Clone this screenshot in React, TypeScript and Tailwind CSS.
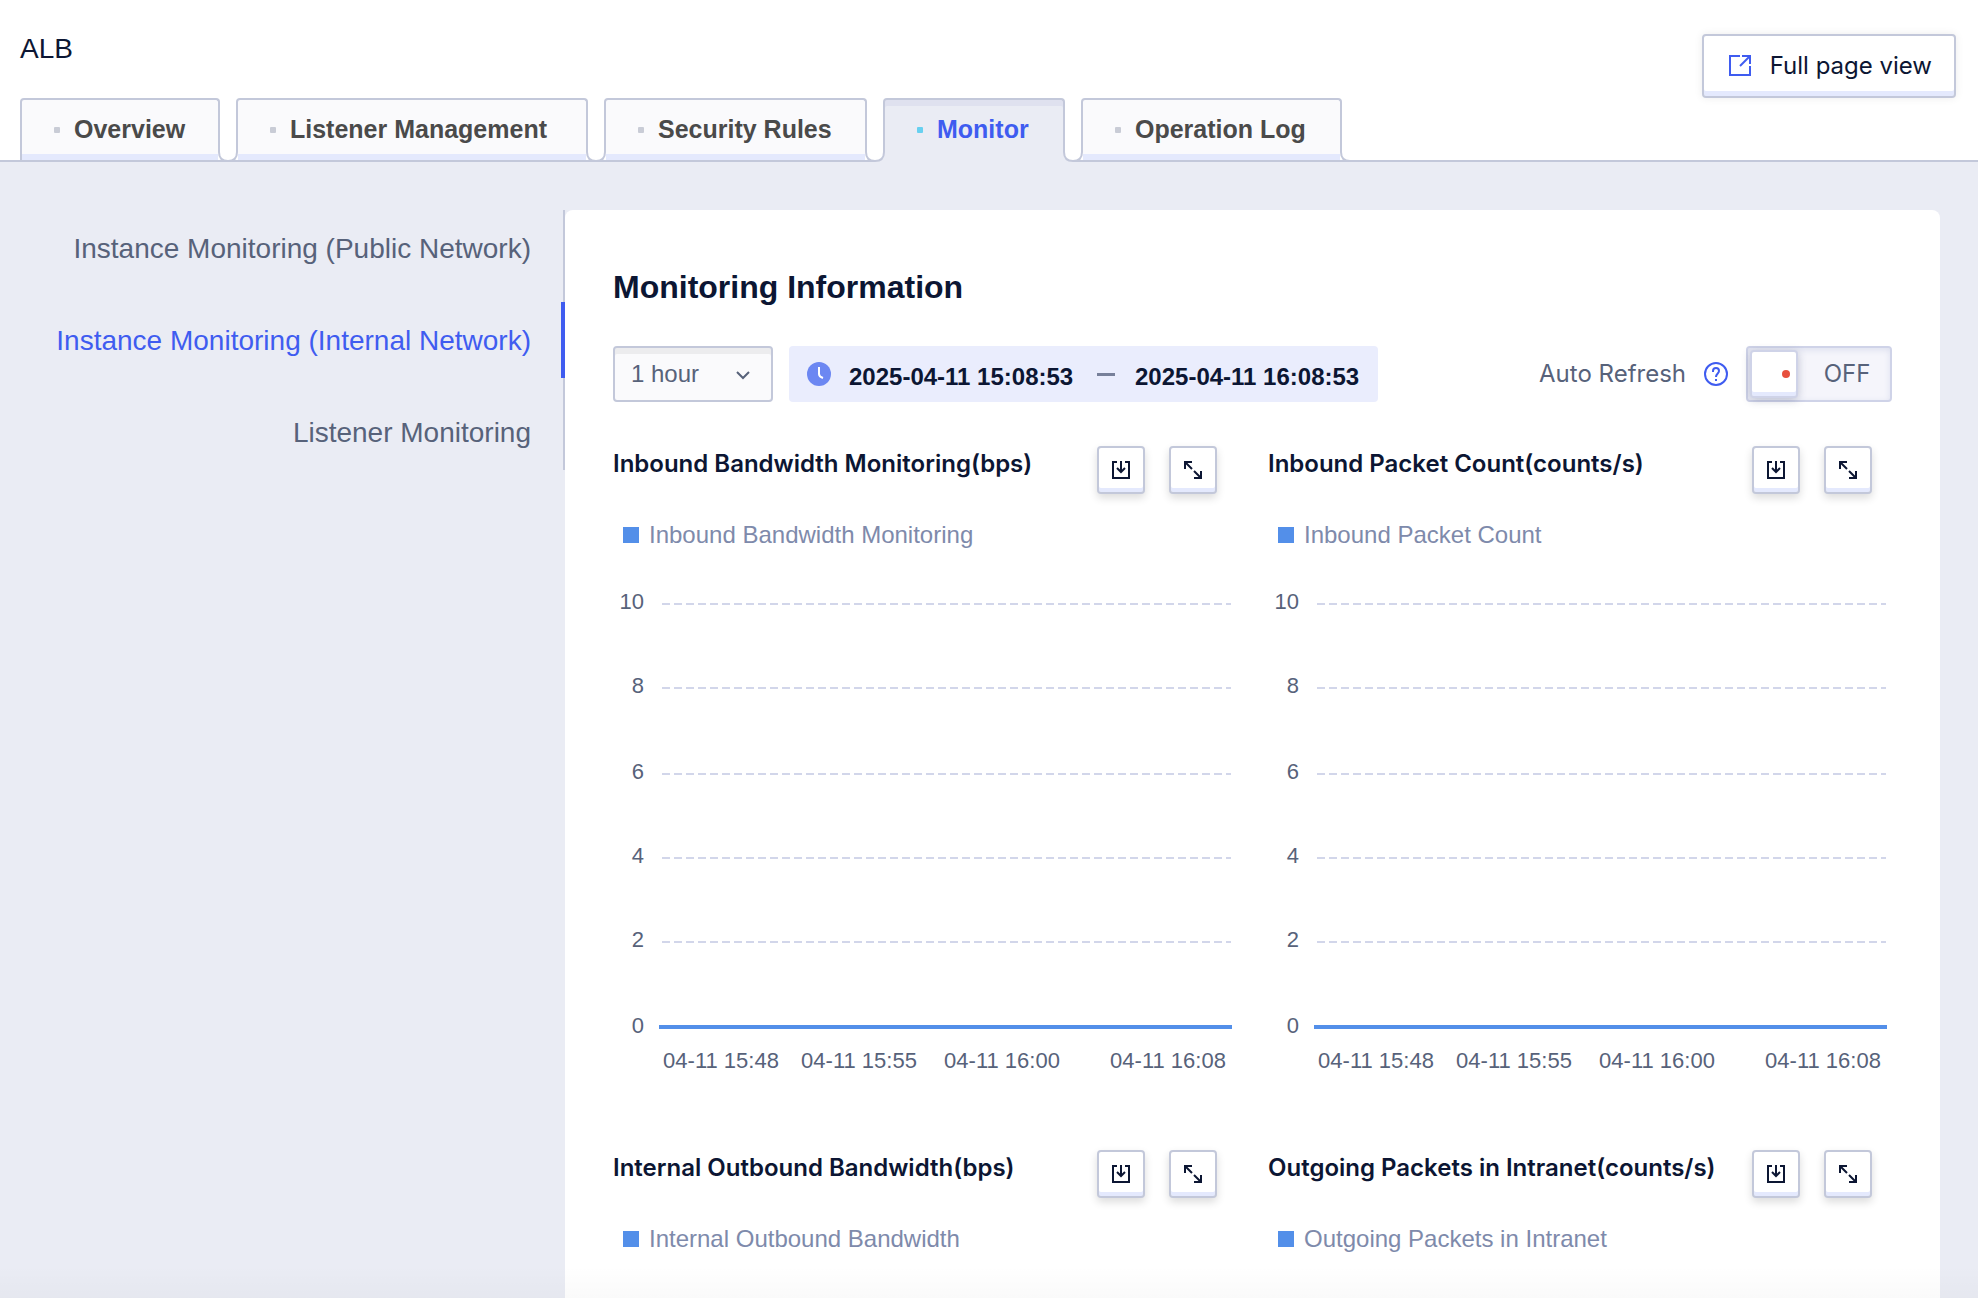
type ChartInfo = { title: string; legend: string }

const TABS = [
  { label: 'Overview', width: 'min-w-[200px]' },
  { label: 'Listener Management', width: 'min-w-[352px]' },
  { label: 'Security Rules', width: 'min-w-[263px]' },
  { label: 'Monitor', width: 'min-w-[182px]' },
  { label: 'Operation Log', width: 'min-w-[261px]' },
]

const MENU = [
  'Instance Monitoring (Public Network)',
  'Instance Monitoring (Internal Network)',
  'Listener Monitoring',
]

const CHARTS: ChartInfo[] = [
  { title: 'Inbound Bandwidth Monitoring(bps)', legend: 'Inbound Bandwidth Monitoring' },
  { title: 'Inbound Packet Count(counts/s)', legend: 'Inbound Packet Count' },
  { title: 'Internal Outbound Bandwidth(bps)', legend: 'Internal Outbound Bandwidth' },
  { title: 'Outgoing Packets in Intranet(counts/s)', legend: 'Outgoing Packets in Intranet' },
]

const Y_TICKS = [
  { value: 10, y: 34 },
  { value: 8, y: 118 },
  { value: 6, y: 204 },
  { value: 4, y: 288 },
  { value: 2, y: 372 },
]

const X_TICKS = [
  { label: '04-11 15:48', x: 108 },
  { label: '04-11 15:55', x: 246 },
  { label: '04-11 16:00', x: 389 },
  { label: '04-11 16:08', x: 555 },
]

function ExternalIcon() {
  return (
    <svg className="size-6" viewBox="0 0 24 24" fill="none" stroke="currentColor" strokeWidth="2" aria-hidden="true">
      <path d="M12 2H2v19h20v-9" />
      <path d="M14 2h8v8" />
      <path d="M22 2 12 12" />
    </svg>
  )
}

function DownloadIcon() {
  return (
    <svg className="size-5" viewBox="0 0 20 20" fill="none" stroke="currentColor" strokeWidth="2" aria-hidden="true">
      <path d="M6 2H2v16h16V2h-4" />
      <path d="M10 1v11M6 8l4 4 4-4" />
    </svg>
  )
}

function ExpandIcon() {
  return (
    <svg className="size-5" viewBox="0 0 20 20" fill="none" stroke="currentColor" strokeWidth="2" aria-hidden="true">
      <path d="M2 9V2h7M2 2l7 7" />
      <path d="M18 11v7h-7M18 18l-7-7" />
    </svg>
  )
}

function HelpIcon() {
  return (
    <svg className="size-6" viewBox="0 0 24 24" fill="none" stroke="currentColor" strokeWidth="2" aria-hidden="true">
      <circle cx="12" cy="12" r="11" />
      <path d="M9 10V9a3 3 0 0 1 6 0c0 2.500-3 2.500-3 6" />
      <path d="M12 17v2" />
    </svg>
  )
}

function ClockIcon() {
  return (
    <svg className="size-6" viewBox="0 0 24 24" fill="none" aria-hidden="true">
      <circle cx="12" cy="12" r="12" fill="#6c87f2" />
      <path d="M12 5v7c0 2 1 3 4 4" stroke="#fff" strokeWidth="2" />
    </svg>
  )
}

// curved foot joining a tab's side to the header line
function TabFoot({ side, active }: { side: 'left' | 'right'; active: boolean }) {
  return (
    <svg
      className={`absolute -bottom-0.5 size-2.5 ${side === 'left' ? '-left-2 -scale-x-100' : '-right-2'}`}
      viewBox="0 0 10 10"
      fill="none"
      aria-hidden="true"
    >
      <path d="M0 0h10v10H0z" fill="#fff" />
      {active && <path d="M0 0h1c0 6 3 9 9 9v1H0z" fill="#eaecf4" />}
      <path d="M1 0c0 6 3 9 9 9" stroke="#c3c8da" strokeWidth="2" />
      {!active && <path d="M0 9h10" stroke="#c3c8da" strokeWidth="2" />}
    </svg>
  )
}

function Tab({ label, width, active, first }: { label: string; width: string; active: boolean; first: boolean }) {
  const look = active
    ? 'h-16 bg-[#eaecf4] pb-0.5 text-[#3f5cf0] shadow-[inset_0_6px_0_#dfe1ef]'
    : 'h-[62px] bg-[#fafafc] text-[#4a4a4a] shadow-[inset_0_-6px_0_#e4e9fd]'
  return (
    <div className="relative h-[62px]">
      <button
        role="tab"
        aria-selected={active}
        className={`flex items-center rounded-t border-2 border-b-0 border-[#c3c8da] px-8 text-[25px] font-bold ${width} ${look}`}
      >
        <span className={`mr-3.5 size-1.5 rounded-[1px] ${active ? 'bg-[#67d0f0]' : 'bg-[#c9ccd6]'}`} />
        {label}
      </button>
      {!first && <TabFoot side="left" active={active} />}
      <TabFoot side="right" active={active} />
    </div>
  )
}

function ToolButton({ label, children }: { label: string; children: React.ReactNode }) {
  return (
    <button
      aria-label={label}
      className="flex size-12 items-center justify-center rounded border-2 border-[#c3c8da] bg-white shadow-[inset_0_-4px_0_#e4e9fd,0_4px_8px_rgba(0,0,0,0.14)]"
    >
      {children}
    </button>
  )
}

function Chart({ title, legend }: ChartInfo) {
  return (
    <section>
      <div className="flex h-12 items-start justify-between pr-5">
        <h3 className="font-[Inter,sans-serif] text-2xl leading-9 font-semibold whitespace-nowrap">{title}</h3>
        <div className="flex gap-6">
          <ToolButton label={`Download ${legend}`}>
            <DownloadIcon />
          </ToolButton>
          <ToolButton label={`Expand ${legend}`}>
            <ExpandIcon />
          </ToolButton>
        </div>
      </div>
      <div className="mt-[25px] flex items-center gap-2.5 pl-2.5 text-2xl leading-8 text-[#7e8aab]">
        <span className="size-4 bg-[#538fe9]" />
        {legend}
      </div>
      <svg className="mt-[19px] w-full" viewBox="0 0 624 520" role="img" aria-label={legend}>
        <g fill="#57627a" fontSize="22">
          {Y_TICKS.map((tick) => (
            <g key={tick.value}>
              <text x="31" y={tick.y + 5} textAnchor="end">
                {tick.value}
              </text>
              <path d={`M49 ${tick.y}H618`} stroke="#d2d6ea" strokeWidth="2" strokeDasharray="8 4" />
            </g>
          ))}
          <text x="31" y="463" textAnchor="end">
            0
          </text>
          {X_TICKS.map((tick) => (
            <text key={tick.label} x={tick.x} y="498" textAnchor="middle">
              {tick.label}
            </text>
          ))}
        </g>
        <path d="M46 457H619" stroke="#538fe9" strokeWidth="4" />
      </svg>
    </section>
  )
}

export default function App() {
  return (
    <div className="relative flex h-screen flex-col overflow-hidden bg-[#eaecf4] font-['Liberation_Sans',Arial,sans-serif] text-[#0c1633]">
      <header className="flex h-[162px] shrink-0 items-start justify-between border-b-2 border-[#c3c8da] bg-white pr-[22px] pl-5">
        <div>
          <h1 className="flex h-[98px] items-center text-[28px]">ALB</h1>
          <div role="tablist" className="flex h-[62px] gap-4">
            {TABS.map((tab, i) => (
              <Tab key={tab.label} label={tab.label} width={tab.width} active={tab.label === 'Monitor'} first={i === 0} />
            ))}
          </div>
        </div>
        <button className="mt-[34px] flex h-16 items-center gap-[18px] rounded border-2 border-[#c3c8da] bg-white pr-[22px] pl-6 font-[Inter,sans-serif] text-2xl shadow-[inset_0_-5px_0_#e4e9fd,0_0_8px_rgba(0,0,0,0.08)]">
          <span className="text-[#3f5cf0]">
            <ExternalIcon />
          </span>
          Full page view
        </button>
      </header>

      <div className="flex flex-1 items-start pt-12 pr-[38px]">
        <nav className="w-[565px] shrink-0">
          <ul className="flex flex-col gap-4 border-r-2 border-[#c3c8da]">
            {MENU.map((item, i) => (
              <li key={item}>
                <a
                  href="#"
                  className={`flex h-[76px] items-center justify-end pt-0.5 text-[28px] ${
                    i === 1 ? '-mr-0.5 border-r-4 border-[#3f5cf0] pr-[30px] text-[#3f5cf0]' : 'pr-8 text-[#57627a]'
                  }`}
                >
                  {item}
                </a>
              </li>
            ))}
          </ul>
        </nav>

        <main className="flex-1 rounded-t-lg bg-white px-12 pt-[57px]">
          <h2 className="text-[32px] leading-10 font-bold">Monitoring Information</h2>

          <div className="mt-[39px] flex h-14 items-center">
            <div className="relative">
              <select
                aria-label="Time range"
                className="h-14 w-40 appearance-none rounded border-2 border-[#c3c8da] bg-[#fafafc] pl-4 text-2xl text-[#57627a] shadow-[inset_0_6px_0_#ececee]"
              >
                <option>1 hour</option>
              </select>
              <svg className="pointer-events-none absolute top-[23px] right-5 h-3 w-5" viewBox="0 0 20 12" fill="none" stroke="#57627a" strokeWidth="2" aria-hidden="true">
                <path d="m4 3 6 6 6-6" />
              </svg>
            </div>

            <div className="ml-4 flex h-14 items-center rounded bg-[#eaedfd] pr-[13px] pl-[18px] text-2xl font-bold">
              <ClockIcon />
              <input aria-label="Start time" readOnly value="2025-04-11 15:08:53" className="ml-[18px] w-[230px] pt-1.5" />
              <span className="mr-5 ml-[18px] h-[3px] w-[18px] bg-[#77809a]" />
              <input aria-label="End time" readOnly value="2025-04-11 16:08:53" className="w-[230px] pt-1.5" />
            </div>

            <div className="ml-auto flex items-center font-[Inter,sans-serif] text-2xl text-[#57627a]">
              <span id="auto-refresh">Auto Refresh</span>
              <button aria-label="Help" className="ml-[18px] text-[#3f5cf0]">
                <HelpIcon />
              </button>
              <button
                role="switch"
                aria-checked="false"
                aria-labelledby="auto-refresh"
                className="ml-[18px] flex h-14 w-[146px] items-center rounded border-2 border-[#cfd3e8] bg-[#f5f5fb] pl-0.5 shadow-[inset_0_2px_6px_#dcdfee]"
              >
                <span className="flex size-12 items-center justify-end rounded border-2 border-[#cfd3e8] bg-white pr-1.5 shadow-[inset_0_-4px_0_#e4e9fd,0_2px_8px_rgba(60,70,110,0.3)]">
                  <span className="size-2 rounded-full bg-[#e7503d]" />
                </span>
                <span className="flex-1 pl-1.5 text-center">OFF</span>
              </button>
            </div>
          </div>

          <div className="mt-11 grid grid-cols-2 gap-x-[31px] gap-y-[60px]">
            {CHARTS.map((chart) => (
              <Chart key={chart.title} {...chart} />
            ))}
          </div>
        </main>
      </div>
      <div className="pointer-events-none absolute inset-x-0 bottom-0 h-8 bg-linear-to-b from-transparent to-black/2" />
    </div>
  )
}
